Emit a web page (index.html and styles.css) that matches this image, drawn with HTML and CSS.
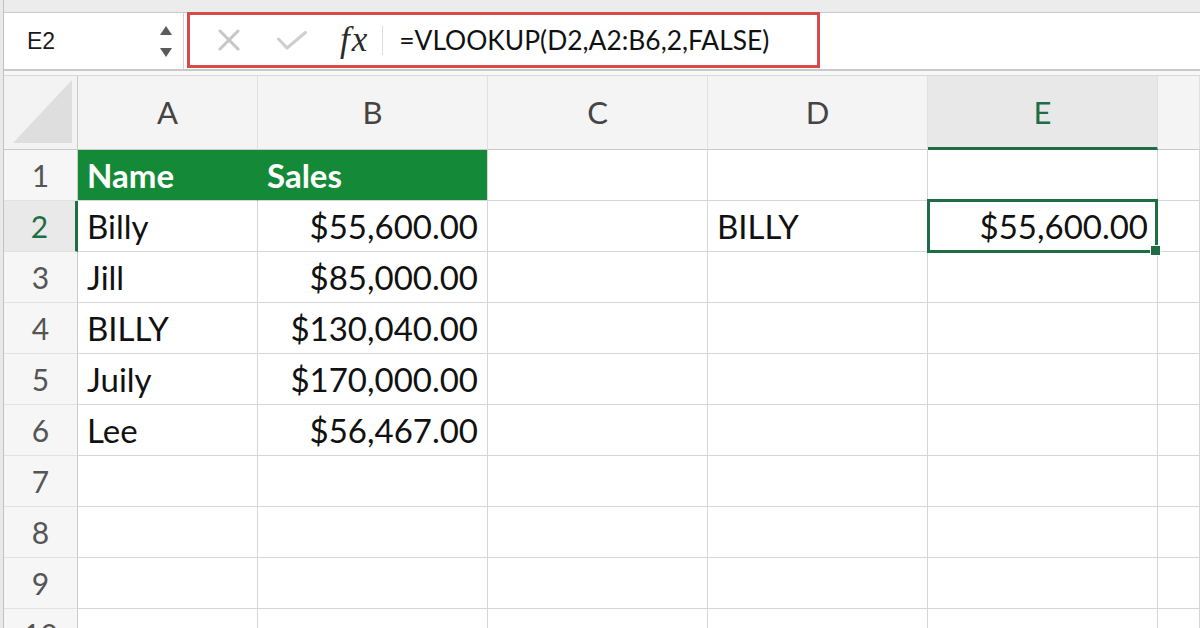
FILE: index.html
```html
<!DOCTYPE html>
<html lang="en">
<head>
    <meta charset="UTF-8">
    <title>VLOOKUP</title>
    <link rel="stylesheet" href="styles.css">
</head>
<body>
 <div class="app">
    <div class="top-strip"></div>

    <div class="formula-bar">
        <div class="name-box">
            <span class="name-ref">E2</span>
            <svg class="spinner" width="12" height="31" viewBox="0 0 12 31">
                <polygon points="0,9 12,9 6,0"/>
                <polygon points="0,22 12,22 6,31"/>
            </svg>
        </div>
        <div class="formula-box">
            <svg class="icon-cancel" width="22" height="22" viewBox="0 0 22 22">
                <path d="M2 2 L20 20 M20 2 L2 20"/>
            </svg>
            <svg class="icon-enter" width="30" height="20" viewBox="0 0 30 20">
                <path d="M1.5 8 L10 17 L28.5 1.5"/>
            </svg>
            <span class="fx">fx</span>
            <span class="formula-sep"></span>
            <span class="formula-text">=VLOOKUP(D2,A2:B6,2,FALSE)</span>
        </div>
    </div>

    <div class="bar-gap"></div>

    <div class="sheet">
        <div class="corner">
            <svg width="73" height="73" viewBox="0 0 73 73"><polygon points="68,4 68,67 9,67"/></svg>
        </div>
        <div class="col-head">A</div>
        <div class="col-head">B</div>
        <div class="col-head">C</div>
        <div class="col-head">D</div>
        <div class="col-head active">E</div>
        <div class="col-head"></div>

        <div class="row-head">1</div>
        <div class="cell title">Name</div>
        <div class="cell title last">Sales</div>
        <div class="cell"></div>
        <div class="cell"></div>
        <div class="cell"></div>
        <div class="cell"></div>

        <div class="row-head active">2</div>
        <div class="cell">Billy</div>
        <div class="cell num">$55,600.00</div>
        <div class="cell"></div>
        <div class="cell">BILLY</div>
        <div class="cell num selected">$55,600.00</div>
        <div class="cell"></div>

        <div class="row-head">3</div>
        <div class="cell">Jill</div>
        <div class="cell num">$85,000.00</div>
        <div class="cell"></div>
        <div class="cell"></div>
        <div class="cell"></div>
        <div class="cell"></div>

        <div class="row-head">4</div>
        <div class="cell">BILLY</div>
        <div class="cell num">$130,040.00</div>
        <div class="cell"></div>
        <div class="cell"></div>
        <div class="cell"></div>
        <div class="cell"></div>

        <div class="row-head">5</div>
        <div class="cell">Juily</div>
        <div class="cell num">$170,000.00</div>
        <div class="cell"></div>
        <div class="cell"></div>
        <div class="cell"></div>
        <div class="cell"></div>

        <div class="row-head">6</div>
        <div class="cell">Lee</div>
        <div class="cell num">$56,467.00</div>
        <div class="cell"></div>
        <div class="cell"></div>
        <div class="cell"></div>
        <div class="cell"></div>

        <div class="row-head">7</div>
        <div class="cell"></div>
        <div class="cell"></div>
        <div class="cell"></div>
        <div class="cell"></div>
        <div class="cell"></div>
        <div class="cell"></div>

        <div class="row-head">8</div>
        <div class="cell"></div>
        <div class="cell"></div>
        <div class="cell"></div>
        <div class="cell"></div>
        <div class="cell"></div>
        <div class="cell"></div>

        <div class="row-head">9</div>
        <div class="cell"></div>
        <div class="cell"></div>
        <div class="cell"></div>
        <div class="cell"></div>
        <div class="cell"></div>
        <div class="cell"></div>

        <div class="row-head">10</div>
        <div class="cell"></div>
        <div class="cell"></div>
        <div class="cell"></div>
        <div class="cell"></div>
        <div class="cell"></div>
        <div class="cell"></div>
    </div>
 </div>
</body>
</html>
```

FILE: styles.css
```css
* {
    box-sizing: border-box;
}

body {
    margin: 0;
    background-color: #e9e9e9;
    font-family: Lato, "Liberation Sans", sans-serif;
    overflow: hidden;
}

.app {
    width: 1197px;
    height: 628px;
    margin-left: 3px;
    border-left: 1px solid #c2c2c2;
    background-color: #fff;
    overflow: hidden;
}

.top-strip {
    height: 13px;
    background-color: #ececec;
    border-bottom: 1px solid #cacaca;
}

/* formula bar */
.formula-bar {
    display: flex;
    height: 58px;
    border-bottom: 2px solid #c9c9c9;
}

.name-box {
    display: flex;
    align-items: center;
    width: 180px;
    padding: 0 11px 0 23px;
    border-right: 1px solid #d2d2d2;
}
.name-ref {
    flex-grow: 1;
    font-family: "Liberation Sans", Arial, sans-serif;
    font-size: 23px;
    color: #1a1a1a;
}
.spinner polygon {
    fill: #5a5a5a;
}

.formula-box {
    display: flex;
    align-items: center;
    align-self: flex-start;
    width: 633px;
    height: 56px;
    margin: -1px 0 0 3px;
    padding-left: 28px;
    border: 3px solid #d64a4b;
}
.icon-cancel path, .icon-enter path {
    fill: none;
    stroke-width: 3;
    stroke-linecap: round;
    stroke-linejoin: round;
}
.icon-cancel path {
    stroke: #c6c6c6;
}
.icon-enter {
    margin-left: 37px;
    margin-top: 2px;
}
.icon-enter path {
    stroke: #cecece;
}
.fx {
    margin-left: 33px;
    font-family: "Liberation Serif", serif;
    font-style: italic;
    font-size: 35px;
    letter-spacing: 2px;
    color: #2a2a2a;
}
.formula-sep {
    width: 1px;
    height: 29px;
    margin-left: 13px;
    background-color: #dcdcdc;
}
.formula-text {
    margin-left: 16px;
    font-size: 26.4px;
    color: #111;
    white-space: nowrap;
}

.bar-gap {
    height: 5px;
    background-color: #f7f7f7;
    border-bottom: 1px solid #d9d9d9;
}

/* sheet grid */
.sheet {
    display: grid;
    grid-template-columns: 74px 180px 230px 220px 220px 230px 1fr;
    grid-template-rows: 74px repeat(10, 51px);
}
.sheet > div {
    border-right: 1px solid #d6d6d6;
    border-bottom: 1px solid #d6d6d6;
    white-space: nowrap;
}

.corner {
    background-color: #f3f3f3;
    border-right-color: #c9c9c9 !important;
    border-bottom-color: #c9c9c9 !important;
}
.corner polygon {
    fill: #dedede;
}

.col-head {
    background-color: #f4f4f4;
    text-align: center;
    font-size: 31px;
    line-height: 73px;
    color: #444;
    border-right-color: #e0e0e0 !important;
    border-bottom-color: #c9c9c9 !important;
}
.col-head.active {
    background-color: #e8e8e8;
    color: #1f6e43;
    border-bottom: 3px solid #1f6e43 !important;
}

.row-head {
    background-color: #f6f6f6;
    text-align: center;
    font-size: 30px;
    line-height: 50px;
    color: #555;
    border-right-color: #c9c9c9 !important;
    border-bottom-color: #e2e2e2 !important;
}
.row-head.active {
    background-color: #e9e9e9;
    color: #1f6e43;
    border-right: 3px solid #1f6e43 !important;
}

.cell {
    padding: 0 9px;
    font-size: 33px;
    line-height: 50px;
    color: #111;
}
.cell.num {
    text-align: right;
}
.cell.title {
    background-color: #148a38;
    color: #fff;
    font-weight: 700;
    border-right-color: #148a38;
}
.cell.title.last {
    border-right-color: #d6d6d6;
}

.cell.selected {
    position: relative;
}
.cell.selected::before {
    content: "";
    position: absolute;
    left: -1px;
    right: -1px;
    top: -2px;
    bottom: -2px;
    border: 3px solid #1f6e43;
}
.cell.selected::after {
    content: "";
    position: absolute;
    right: -4px;
    bottom: -5px;
    width: 9px;
    height: 9px;
    background-color: #1f6e43;
    border: 1px solid #fff;
}
```
